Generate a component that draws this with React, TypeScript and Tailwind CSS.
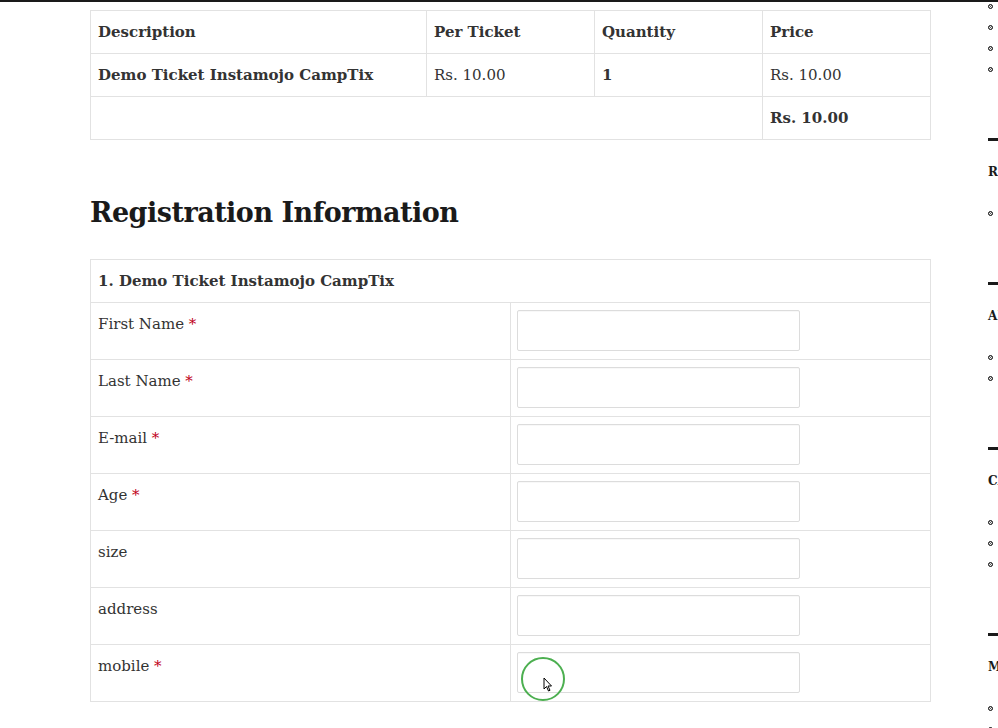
const summary = [
  { desc: "Demo Ticket Instamojo CampTix", per: "Rs. 10.00", qty: "1", price: "Rs. 10.00" },
];

const fields = [
  { label: "First Name", required: true },
  { label: "Last Name", required: true },
  { label: "E-mail", required: true },
  { label: "Age", required: true },
  { label: "size", required: false },
  { label: "address", required: false },
  { label: "mobile", required: true },
];

// sidebar widgets, cut off at the right edge of the window
const widgets = [
  { title: "", count: 4 },
  { title: "Recent Comments", count: 1 },
  { title: "Archives", count: 2 },
  { title: "Categories", count: 3 },
  { title: "Meta", count: 2 },
];

function Bullet() {
  return <span className="block w-[5px] h-[5px] rounded-full border border-[#222] bg-[#222] ring-1 ring-white ring-inset" />;
}

export default function App() {
  return (
    <div className="relative w-[998px] h-[728px] overflow-hidden bg-white text-[#333] font-['DejaVu_Serif','Liberation_Serif',serif]">
      <div className="h-[2px] bg-[#1a1a1a]" />

      <div className="flex">
        {/* main column */}
        <div className="ml-[90px] w-[840px] shrink-0">
          {/* ticket summary */}
          <table className="mt-[8px] w-full table-fixed border-collapse text-[15px] leading-[22px]">
            <colgroup>
              <col className="w-[336px]" />
              <col className="w-[168px]" />
              <col className="w-[168px]" />
              <col className="w-[168px]" />
            </colgroup>
            <thead>
              <tr className="font-bold">
                <th className="border border-[#e2e2e2] px-[7px] py-[10px] text-left">Description</th>
                <th className="border border-[#e2e2e2] px-[7px] py-[10px] text-left">Per Ticket</th>
                <th className="border border-[#e2e2e2] px-[7px] py-[10px] text-left">Quantity</th>
                <th className="border border-[#e2e2e2] px-[7px] py-[10px] text-left">Price</th>
              </tr>
            </thead>
            <tbody>
              {summary.map((s) => (
                <tr key={s.desc}>
                  <td className="border border-[#e2e2e2] px-[7px] py-[10px] font-bold">{s.desc}</td>
                  <td className="border border-[#e2e2e2] px-[7px] py-[10px]">{s.per}</td>
                  <td className="border border-[#e2e2e2] px-[7px] py-[10px] font-bold">{s.qty}</td>
                  <td className="border border-[#e2e2e2] px-[7px] py-[10px]">{s.price}</td>
                </tr>
              ))}
              <tr>
                <td colSpan={3} className="border border-[#e2e2e2] px-[7px] py-[10px]">&nbsp;</td>
                <td className="border border-[#e2e2e2] px-[7px] py-[10px] font-bold">Rs. 10.00</td>
              </tr>
            </tbody>
          </table>

          <h2 className="mt-[55px] text-[27px] leading-[36px] font-bold tracking-[-0.5px] text-[#1a1a1a]">
            Registration Information
          </h2>

          {/* attendee form */}
          <table className="mt-[28px] w-full table-fixed border-collapse text-[15px] leading-[22px]">
            <colgroup>
              <col className="w-[420px]" />
              <col className="w-[420px]" />
            </colgroup>
            <thead>
              <tr>
                <th colSpan={2} className="border border-[#e2e2e2] px-[7px] py-[10px] text-left font-bold">
                  1. Demo Ticket Instamojo CampTix
                </th>
              </tr>
            </thead>
            <tbody>
              {fields.map((f) => (
                <tr key={f.label}>
                  <td className="border border-[#e2e2e2] px-[7px] pt-[10px] pb-[24px] align-top">
                    {f.label}
                    {f.required && <span className="text-[#c0001a]"> *</span>}
                  </td>
                  <td className="border border-[#e2e2e2] pl-[6px] py-[7px] align-top">
                    <input
                      type="text"
                      className="block w-[283px] h-[41px] rounded-[2px] border border-[#dcdcdc] bg-white shadow-[inset_0_1px_1px_rgba(0,0,0,0.03)] outline-none"
                    />
                  </td>
                </tr>
              ))}
            </tbody>
          </table>
        </div>

        {/* sidebar, mostly off screen */}
        <div className="ml-[58px] w-[240px] shrink-0 text-[12px] -mt-[6px]">
          {widgets.map((w, i) => (
            <div key={i}>
              {w.title && (
                <>
                  <div className="mt-[58px] h-[3px] w-[24px] bg-[#1a1a1a]" />
                  <h4 className="mt-[22px] h-[18px] leading-[18px] font-bold uppercase tracking-wide text-[#1a1a1a]">
                    {w.title}
                  </h4>
                </>
              )}
              <ul className={w.title ? "mt-[22px]" : ""}>
                {Array.from({ length: w.count }).map((_, j) => (
                  <li key={j} className="flex h-[21px] items-center">
                    <Bullet />
                  </li>
                ))}
              </ul>
            </div>
          ))}
        </div>
      </div>

      {/* click indicator from the screen capture */}
      <div className="absolute left-[521px] top-[657px] w-[44px] h-[44px] rounded-full border-2 border-[#4caf50]" />
      <svg className="absolute left-[543px] top-[677px]" width="10" height="15" viewBox="0 0 10 15">
        <path d="M1 1 L1 12 L3.5 9.5 L5.5 14 L7 13.3 L5 9 L8.5 9 Z" fill="#fff" stroke="#000" strokeWidth="1" strokeLinejoin="round" />
      </svg>
    </div>
  );
}
